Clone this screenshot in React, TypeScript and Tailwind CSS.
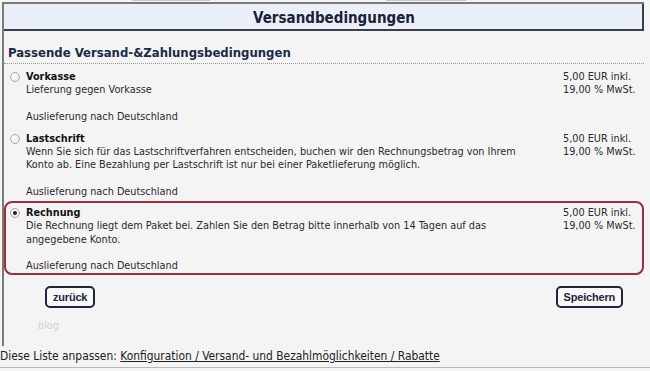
import React from "react";

type Option = {
  title: string;
  lines: string[];
  selected?: boolean;
  pad: string;
};

const options: Option[] = [
  { title: "Vorkasse", lines: ["Lieferung gegen Vorkasse"], pad: "pt-[6px] pb-[4px]" },
  {
    title: "Lastschrift",
    lines: [
      "Wenn Sie sich für das Lastschriftverfahren entscheiden, buchen wir den Rechnungsbetrag von Ihrem",
      "Konto ab. Eine Bezahlung per Lastschrift ist nur bei einer Paketlieferung möglich.",
    ],
    pad: "pt-[5px] pb-[2px]",
  },
  {
    title: "Rechnung",
    lines: [
      "Die Rechnung liegt dem Paket bei. Zahlen Sie den Betrag bitte innerhalb von 14 Tagen auf das",
      "angegebene Konto.",
    ],
    selected: true,
    pad: "mt-[1px] pt-[3px] pb-[1px]",
  },
];

const Radio = ({ checked }: { checked?: boolean }) => (
  <span className="mt-[2px] flex h-[10px] w-[10px] items-center justify-center rounded-full border border-[#a9a9a9] bg-[radial-gradient(circle_at_35%_35%,#ffffff,#e4e4e4)]">
    {checked && <span className="h-[4px] w-[4px] rounded-full bg-[#222]" />}
  </span>
);

const OptionRow = ({ option }: { option: Option }) => {
  const box = option.selected
    ? "flex rounded-[8px] border-2 border-[#9b2f3c] pl-[3px] pr-[4px]"
    : "flex pl-[5px] pr-[6px]";
  return (
    <div className={`${box} ${option.pad}`}>
      <div className="w-[17px] pl-[1px]">
        <Radio checked={option.selected} />
      </div>
      <div className="flex-1 leading-[13.3px]">
        <div className="font-bold text-[#111]">{option.title}</div>
        {option.lines.map((l) => (
          <div key={l}>{l}</div>
        ))}
        <div className="mt-[13px]">Auslieferung nach Deutschland</div>
      </div>
      <div className="w-[75px] leading-[13.3px]">
        <div>5,00 EUR inkl.</div>
        <div>19,00 % MwSt.</div>
      </div>
    </div>
  );
};

const Button = ({ label }: { label: string }) => (
  <button className="h-[22px] rounded-[5px] border-2 border-[#1f2440] bg-[#f8f8f8] px-[6px] font-['Liberation_Sans',sans-serif] text-[11px] font-bold leading-[16px] tracking-[-0.2px] text-[#1f2440]">
    {label}
  </button>
);

export default function App() {
  return (
    <div className="relative h-[371px] w-[650px] overflow-hidden bg-[#f4f4f4] font-['DejaVu_Sans_Condensed','DejaVu_Sans',sans-serif] text-[10.8px] text-[#2b2b2b]">
      <div className="flex h-[2px] items-start">
        <div className="ml-[132px] h-[1px] w-[78px] bg-[#c8c8c8]" />
        <div className="ml-[176px] h-[1px] w-[80px] bg-[#c8c8c8]" />
      </div>
      <div className="ml-[2px] w-[642px] border-l-2 border-t-2 border-[#7a7a7a]">
        <div className="h-[27px] border-b-2 border-r-2 border-[#3d3d4a] bg-[#eaf0f8] pl-[22px] text-center text-[15px] font-bold leading-[28px] text-[#1c2136]">
          Versandbedingungen
        </div>
        <div className="pb-[14px]">
          <div className="border-b border-dotted border-[#9a9a9a] pb-[2px] pl-[4px] pt-[14px] text-[13px] font-bold leading-[16px] text-[#1c2a44]">
            Passende Versand-&amp;Zahlungsbedingungen
          </div>
          <div className="flex flex-col">
            {options.map((o) => (
              <OptionRow key={o.title} option={o} />
            ))}
          </div>
          <div className="flex justify-between pl-[41px] pr-[21px] pt-[11px]">
            <Button label="zurück" />
            <Button label="Speichern" />
          </div>
          <div className="pl-[34px] pt-[11px] leading-[13px] text-[#d2d2d2]">blog</div>
        </div>
      </div>
      <div className="border-b border-[#b9b9b9] pb-[4px] pt-[3px] text-[11.9px] leading-[14px] text-[#222]">
        Diese Liste anpassen:{" "}
        <span className="underline">Konfiguration / Versand- und Bezahlmöglichkeiten / Rabatte</span>
      </div>
    </div>
  );
}
